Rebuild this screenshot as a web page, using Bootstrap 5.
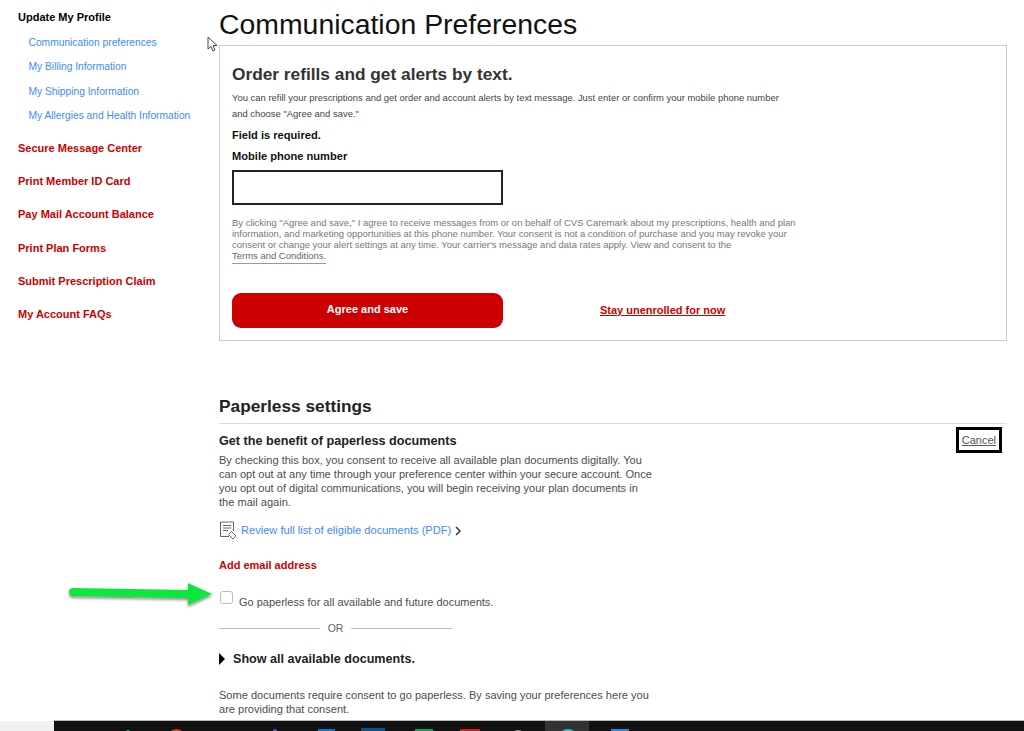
<!DOCTYPE html>
<html lang="en">
<head>
    <meta charset="UTF-8">
    <title>Communication Preferences</title>
    <link href="https://cdn.jsdelivr.net/npm/bootstrap@5.3.3/dist/css/bootstrap.min.css" rel="stylesheet">
    <style>
        html, body {
            height: 731px;
            overflow: hidden;
        }

        body {
            font-family: "Liberation Sans", Arial, sans-serif;
            color: #333;
            background: #fff;
        }

        .page-wrap {
            height: 720px;
            overflow: hidden;
            padding-top: 8px;
        }

        .side-col {
            width: 219px;
            flex: none;
            padding-left: 18px;
        }

        .side-head {
            font-size: 11px;
            font-weight: bold;
            color: #000;
            height: 18px;
            line-height: 18px;
        }

        .side-sub {
            display: block;
            font-size: 10.25px;
            line-height: 14px;
            color: #3d8bfd;
            text-decoration: none;
            padding-left: 10.5px;
            margin-top: 10.2px;
        }

        .side-red {
            display: block;
            font-size: 11px;
            font-weight: bold;
            line-height: 14px;
            color: #c00;
            text-decoration: none;
            margin-top: 19.1px;
        }

        .side-sub + .side-red {
            margin-top: 18.5px;
        }

        .main-col {
            width: 788px;
            flex: none;
        }

        .page-title {
            font-size: 28.4px;
            font-weight: 400;
            color: #111;
            line-height: 33px;
            margin: 0 0 4px;
        }

        .text-box {
            border: 1px solid #ccc;
            height: 296px;
            padding: 18px 12px 0;
        }

        .box-title {
            font-size: 17.3px;
            font-weight: bold;
            color: #333;
            line-height: 20px;
            margin: 0 0 6px;
        }

        .box-copy {
            font-size: 9.45px;
            line-height: 16px;
            color: #444;
            margin: 0 0 6px;
            width: 560px;
        }

        .field-lbl {
            font-size: 11.1px;
            font-weight: bold;
            color: #111;
            line-height: 14px;
            margin-bottom: 7px;
        }

        .phone-input {
            display: block;
            width: 271px;
            height: 35px;
            border: 2px solid #222;
            border-radius: 0;
            margin-bottom: 12px;
        }

        .legal-copy {
            font-size: 9.47px;
            line-height: 11.1px;
            color: #777;
            width: 570px;
            margin: 0;
        }

        .legal-copy a {
            color: #666;
            text-decoration: none;
            border-bottom: 1px solid #999;
            padding-bottom: 2px;
        }

        .agree-btn {
            width: 271px;
            height: 35px;
            background: #c00;
            border: 0;
            border-radius: 9px;
            color: #fff;
            font-size: 11px;
            font-weight: bold;
            padding-bottom: 8px;
        }

        .action-row {
            margin-top: 31.6px;
        }

        .stay-link {
            color: #c00;
            font-size: 11px;
            font-weight: bold;
            margin-left: 97px;
        }

        .section-title {
            font-size: 17.3px;
            font-weight: bold;
            color: #222;
            line-height: 20px;
            margin: 55px 0 0;
            padding-bottom: 7px;
            border-bottom: 1px solid #ddd;
        }

        .benefit-head {
            font-size: 12.65px;
            font-weight: bold;
            color: #222;
            line-height: 16px;
            margin-top: 9px;
        }

        .benefit-copy {
            font-size: 11.05px;
            line-height: 14px;
            color: #4d4d4d;
            width: 436px;
            margin: 4px 0 0;
        }

        .cancel-link {
            border: 3px solid #000;
            color: #555;
            font-size: 11px;
            line-height: 14px;
            padding: 3px;
            margin: 3px 5px 0 0;
        }

        .pdf-link {
            color: #3d8bfd;
            font-size: 11.1px;
            text-decoration: none;
        }

        .pdf-row {
            margin-top: 12px;
        }

        .email-link {
            color: #c00;
            font-size: 11px;
            font-weight: bold;
            line-height: 14px;
            margin-top: 18px;
        }

        .paper-check {
            width: 13px;
            height: 13px;
            margin: 0 0 0 1px;
            border: 1.5px solid #bbb;
            border-radius: 2px;
            background: #fff;
        }

        .paper-row {
            margin-top: 19px;
            gap: 6px;
            font-size: 11px;
            color: #4d4d4d;
            line-height: 14px;
        }

        .paper-row span {
            padding-top: 4px;
        }

        .or-row {
            width: 233px;
            gap: 8px;
            font-size: 10.5px;
            color: #666;
            line-height: 14px;
            margin-top: 12px;
        }

        .or-row hr {
            flex: 1;
            margin: 0;
            border-color: #bbb;
            opacity: 1;
        }

        .show-row {
            font-size: 12.6px;
            font-weight: bold;
            color: #222;
            line-height: 16px;
            margin-top: 16px;
        }

        .tri-right {
            width: 0;
            height: 0;
            border-left: 6px solid #000;
            border-top: 6px solid transparent;
            border-bottom: 6px solid transparent;
            margin: 0 8px 0 0;
        }

        .consent-copy {
            font-size: 11.05px;
            line-height: 14px;
            color: #4d4d4d;
            width: 436px;
            margin: 21px 0 0;
        }

        .task-bar {
            height: 11px;
            background: #111;
            border-top: 1px solid #bbb;
            margin-left: 54px;
            position: relative;
            overflow: visible;
        }

        .task-stub {
            position: absolute;
            left: -54px;
            top: 0;
            width: 54px;
            height: 10px;
            background: #f0f0f0;
        }

        .task-active {
            position: absolute;
            left: 491px;
            top: 0;
            width: 44px;
            height: 10px;
            background: #333;
        }

        .task-ic {
            position: absolute;
            top: 8px;
            height: 12px;
        }

        .ic-green-dot { left: 70px; top: 9px; width: 8px; border-radius: 50%; background: #2e9e5b; }
        .ic-red-dot { left: 115px; width: 15px; border-radius: 50%; background: #d9342b; }
        .ic-purple { left: 218px; width: 6px; border-radius: 50%; background: #6a5fc1; }
        .ic-blue { left: 264px; width: 17px; background: #1e6fb8; }
        .ic-navy { left: 307px; top: 7px; width: 24px; background: #14507f; }
        .ic-green { left: 361px; width: 18px; background: #1d9a5b; }
        .ic-red { left: 406px; width: 20px; background: #c8201c; }
        .ic-gray { left: 460px; top: 9px; width: 8px; border-radius: 3px 3px 0 0; background: #888; }
        .ic-cyan { left: 506px; width: 16px; border-radius: 50%; background: #35b8c8; }
        .ic-sky { left: 557px; width: 18px; background: #2a86d8; }

        .mouse-ptr {
            position: absolute;
            left: 207px;
            top: 36px;
        }

        .green-arrow {
            position: absolute;
            left: 67px;
            top: 580px;
        }
    </style>
</head>
<body>

<div class="page-wrap d-flex">
    <!-- Side menu -->
    <div class="side-col">
        <div class="side-head">Update My Profile</div>
        <a class="side-sub" href="#">Communication preferences</a>
        <a class="side-sub" href="#">My Billing Information</a>
        <a class="side-sub" href="#">My Shipping Information</a>
        <a class="side-sub" href="#">My Allergies and Health Information</a>
        <a class="side-red" href="#">Secure Message Center</a>
        <a class="side-red" href="#">Print Member ID Card</a>
        <a class="side-red" href="#">Pay Mail Account Balance</a>
        <a class="side-red" href="#">Print Plan Forms</a>
        <a class="side-red" href="#">Submit Prescription Claim</a>
        <a class="side-red" href="#">My Account FAQs</a>
    </div>

    <!-- Main content -->
    <div class="main-col">
        <h1 class="page-title">Communication Preferences</h1>

        <div class="text-box">
            <h2 class="box-title">Order refills and get alerts by text.</h2>
            <p class="box-copy">You can refill your prescriptions and get order and account alerts by text message. Just enter or confirm your mobile phone number and choose "Agree and save."</p>
            <div class="field-lbl">Field is required.</div>
            <div class="field-lbl">Mobile phone number</div>
            <input type="text" class="form-control phone-input">
            <p class="legal-copy">By clicking "Agree and save," I agree to receive messages from or on behalf of CVS Caremark about my prescriptions, health and plan information, and marketing opportunities at this phone number. Your consent is not a condition of purchase and you may revoke your consent or change your alert settings at any time. Your carrier's message and data rates apply. View and consent to the<br><a href="#">Terms and Conditions.</a></p>
            <div class="action-row d-flex align-items-center">
                <button type="button" class="btn agree-btn">Agree and save</button>
                <a class="stay-link" href="#">Stay unenrolled for now</a>
            </div>
        </div>

        <h2 class="section-title">Paperless settings</h2>
        <div class="d-flex justify-content-between align-items-start">
            <div>
                <div class="benefit-head">Get the benefit of paperless documents</div>
                <p class="benefit-copy">By checking this box, you consent to receive all available plan documents digitally. You can opt out at any time through your preference center within your secure account. Once you opt out of digital communications, you will begin receiving your plan documents in the mail again.</p>
            </div>
            <a class="cancel-link" href="#">Cancel</a>
        </div>

        <div class="pdf-row d-flex align-items-center gap-1">
            <svg width="18" height="19" viewBox="0 0 18 19" fill="none" stroke="#666" stroke-width="1">
                <path d="M10 15.500H1.500V1h13v9"/>
                <path d="M4 4.500h8M4 7h8M4 9.500h5"/>
                <path d="M9.500 13.500l3-3 4.500 4.500-3 3z"/>
            </svg>
            <a class="pdf-link" href="#">Review full list of eligible documents (PDF)</a>
            <svg width="6" height="10" viewBox="0 0 6 10" fill="none" stroke="#333" stroke-width="1.5">
                <path d="M1 1l4 4-4 4"/>
            </svg>
        </div>

        <div class="email-link">Add email address</div>

        <div class="paper-row d-flex align-items-start">
            <input type="checkbox" class="paper-check form-check-input">
            <span>Go paperless for all available and future documents.</span>
        </div>

        <div class="or-row d-flex align-items-center">
            <hr>
            <span>OR</span>
            <hr>
        </div>

        <div class="show-row d-flex align-items-center">
            <span class="tri-right"></span>
            <span>Show all available documents.</span>
        </div>

        <p class="consent-copy">Some documents require consent to go paperless. By saving your preferences here you are providing that consent.</p>
    </div>
</div>

<!-- Windows taskbar at the bottom of the capture -->
<div class="task-bar">
    <div class="task-stub"></div>
    <div class="task-active"></div>
    <span class="task-ic ic-green-dot"></span>
    <span class="task-ic ic-red-dot"></span>
    <span class="task-ic ic-purple"></span>
    <span class="task-ic ic-blue"></span>
    <span class="task-ic ic-navy"></span>
    <span class="task-ic ic-green"></span>
    <span class="task-ic ic-red"></span>
    <span class="task-ic ic-gray"></span>
    <span class="task-ic ic-cyan"></span>
    <span class="task-ic ic-sky"></span>
</div>

<svg class="mouse-ptr" width="12" height="17" viewBox="0 0 12 17">
    <path d="M1 1v12l3-2.500 2 4.500 2-1-2-4.500h4z" fill="#fff" stroke="#444" stroke-width="1"/>
</svg>

<svg class="green-arrow" width="150" height="32" viewBox="0 0 150 32">
    <defs>
        <filter id="arrowShadow" x="-5%" y="-30%" width="110%" height="170%">
            <feDropShadow dx="0" dy="2" stdDeviation="1.500" flood-color="#000" flood-opacity="0.45"/>
        </filter>
    </defs>
    <path d="M6 8l115 2V3l24 11-24 11v-7L6 16a4 4 0 0 1 0-8z" fill="#0be63c" filter="url(#arrowShadow)"/>
</svg>

<script src="https://cdn.jsdelivr.net/npm/bootstrap@5.3.3/dist/js/bootstrap.bundle.min.js"></script>
</body>
</html>
